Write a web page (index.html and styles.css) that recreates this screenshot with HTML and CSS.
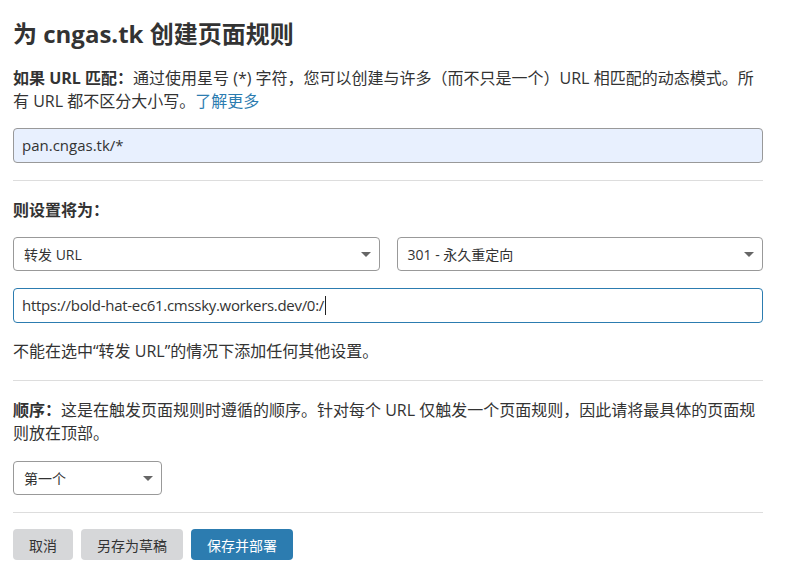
FILE: index.html
```html
<!DOCTYPE html>
<html lang="zh-CN">
<head>
<meta charset="utf-8">
<title>创建页面规则</title>
<link rel="stylesheet" href="styles.css">
</head>
<body>
<div class="page">
  <h1 class="title">为 cngas.tk 创建页面规则</h1>
  <p class="desc"><strong>如果 URL 匹配：</strong>通过使用星号 (*) 字符，您可以创建与许多（而不只是一个）URL 相匹配的动态模式。所有 URL 都不区分大小写。<a class="link" href="#">了解更多</a></p>
  <div class="field autofill">pan.cngas.tk/*</div>
  <hr class="rule">
  <p class="label"><strong>则设置将为：</strong></p>
  <div class="row">
    <div class="select"><span>转发 URL</span><svg class="arrow" width="10" height="5" viewBox="0 0 10 5"><path d="M0 0H10L5 5Z" fill="#666"/></svg></div>
    <div class="select"><span>301 - 永久重定向</span><svg class="arrow" width="10" height="5" viewBox="0 0 10 5"><path d="M0 0H10L5 5Z" fill="#666"/></svg></div>
  </div>
  <div class="field focused url">https://bold-hat-ec61.cmssky.workers.dev/0:/<span class="caret"></span></div>
  <p class="note">不能在选中“转发 URL”的情况下添加任何其他设置。</p>
  <hr class="rule">
  <p class="desc"><strong>顺序：</strong>这是在触发页面规则时遵循的顺序。针对每个 URL 仅触发一个页面规则，因此请将最具体的页面规则放在顶部。</p>
  <div class="select small"><span>第一个</span><svg class="arrow" width="10" height="5" viewBox="0 0 10 5"><path d="M0 0H10L5 5Z" fill="#666"/></svg></div>
  <hr class="rule">
  <div class="actions">
    <button class="btn gray">取消</button>
    <button class="btn gray">另存为草稿</button>
    <button class="btn blue">保存并部署</button>
  </div>
</div>
</body>
</html>
```
FILE: styles.css
```css
html, body {
  margin: 0;
  padding: 0;
  background: #fff;
}
body {
  font-family: "Open Sans", "Noto Sans CJK SC", sans-serif;
  color: #333;
  font-size: 16px;
}
.page {
  width: 750px;
  padding: 19px 13px 0;
}
.title {
  margin: 0 0 19px;
  font-size: 24px;
  line-height: 29px;
  font-weight: 700;
  color: #333;
}
.desc, .label, .note {
  margin: 0;
  font-size: 16px;
  line-height: 23px;
}
.desc strong, .label strong {
  font-weight: 700;
}
.link {
  color: #2c7cb0;
  text-decoration: none;
}
.field {
  box-sizing: border-box;
  height: 35px;
  margin-top: 15px;
  padding: 0 8px;
  border: 1px solid #999;
  border-radius: 4px;
  font-size: 15px;
  line-height: 33px;
  display: flex;
  align-items: center;
}
.autofill {
  background: #e8f0fe;
}
.focused {
  border-color: #2c7cb0;
}
.url {
  letter-spacing: -0.3px;
}
.caret {
  display: inline-block;
  width: 1px;
  height: 19px;
  background: #222;
  margin-left: 1px;
}
.rule {
  border: 0;
  border-top: 1px solid #ddd;
  margin: 17px 0 18px;
}
.row {
  display: flex;
  gap: 17px;
  margin-top: 15px;
}
.row + .field {
  margin-top: 17px;
}
.select {
  box-sizing: border-box;
  flex: 1;
  height: 34px;
  padding: 0 8px 0 10px;
  border: 1px solid #999;
  border-radius: 4px;
  font-size: 14px;
  display: flex;
  align-items: center;
  justify-content: space-between;
}
.select.small {
  width: 149px;
  flex: none;
  margin-top: 16px;
}
.note {
  margin-top: 17px;
}
.select.small + .rule {
  margin-bottom: 16px;
}
.actions {
  display: flex;
  gap: 8px;
}
.btn {
  height: 31px;
  padding: 0 16px;
  border: 0;
  border-radius: 4px;
  font-family: inherit;
  font-size: 14px;
}
.gray {
  background: #d6d7d9;
  color: #333;
}
.blue {
  background: #2c7cb0;
  color: #fff;
}
```
